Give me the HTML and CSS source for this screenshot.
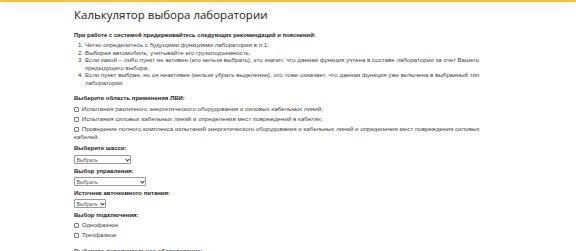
FILE: index.html
```html
<!DOCTYPE html>
<html lang="ru">
<head>
<meta charset="UTF-8" />
<meta name="viewport" content="width=device-width, initial-scale=1" />
<title>Калькулятор выбора лаборатории</title>
<link rel="stylesheet" href="styles.css">
</head>
<body>

<div class="topbar"></div>

<main class="calc">
  <h1>Калькулятор выбора лаборатории</h1>

  <p class="lead">При работе с системой придерживайтесь следующих рекомендаций и пояснений:</p>
  <ol class="rules">
    <li>Четко определитесь с будущими функциями лаборатории в п.1;</li>
    <li>Выбирая автомобиль, учитывайте его грузоподъемность;</li>
    <li>Если какой – либо пункт не активен (его нельзя выбрать), это значит, что данная функция учтена в составе лаборатории за счет Вашего предыдущего выбора;</li>
    <li>Если пункт выбран, но он неактивен (нельзя убрать выделение), это тоже означает, что данная функция уже включена в выбранный тип лаборатории</li>
  </ol>

  <h3 class="first">Выберите область применения ЛВИ:</h3>
  <label class="check"><input type="checkbox"> Испытания различного энергетического оборудования и силовых кабельных линий;</label>
  <label class="check"><input type="checkbox"> Испытания силовых кабельных линий и определения мест повреждений в кабелях;</label>
  <label class="check"><input type="checkbox"> Проведение полного комплекса испытаний энергетического оборудования и кабельных линий и определения мест повреждения силовых кабелей.</label>

  <h3>Выберите шасси:</h3>
  <span class="pick w1"><select><option>Выбрать</option></select></span>

  <h3 class="tight">Выбор управления:</h3>
  <span class="pick w2"><select><option>Выбрать</option></select></span>

  <h3 class="tight">Источник автономного питания:</h3>
  <span class="pick w3"><select><option>Выбрать</option></select></span>

  <h3 class="tight">Выбор подключения:</h3>
  <label class="check"><input type="checkbox"> Однофазное</label>
  <label class="check"><input type="checkbox"> Трехфазное</label>

  <h3 class="next">Выберите дополнительное оборудование:</h3>
</main>

</body>
</html>
```

FILE: styles.css
```css
body { margin: 0; font-family: "Liberation Sans", Arial, sans-serif; color: #333; background: #fff; }
.topbar { height: 2px; background: #f5c234; box-shadow: 0 2px 6px rgba(0,0,0,0.12); }
.calc { margin-left: 74px; width: 456px; padding-top: 4px; }
h1 { font-family: "Open Sans", sans-serif; font-weight: 400; font-size: 11.5px; color: #222; margin: 0 0 7px; line-height: 18px; }
.lead { font-size: 5.9px; font-weight: bold; color: #222; margin: 0 0 2px; line-height: 8px; }
.rules { font-size: 6.2px; line-height: 7.5px; margin: 0; padding-left: 11px; padding-right: 20px; color: #444; }
h3 { font-size: 6px; font-weight: bold; color: #222; margin: 3px 0 3px; line-height: 8px; }
h3.first { margin-top: 8px; margin-bottom: 3px; }
h3.tight { margin: 3px 0 2px; }
h3.next { margin-top: 8px; color: #444; }
.check { display: block; max-width: 430px; font-size: 6.2px; line-height: 8px; color: #444; margin-bottom: 2px; }
.check input { appearance: none; width: 5px; height: 5px; margin: 0 1px 0 0; border: 0.7px solid #777; border-radius: 1px; vertical-align: -0.5px; background: #fff; }
.pick { display: block; position: relative; height: 9px; margin-bottom: 1px; }
.pick select { appearance: none; display: block; width: 100%; height: 9px; font-family: "Liberation Sans", Arial, sans-serif; font-size: 5.3px; padding: 0 0 0 1.5px; border: 0.8px solid #999; border-radius: 1px; color: #555; background: #fff; margin: 0; box-sizing: border-box; }
.pick::after { content: ""; position: absolute; right: 2.5px; top: 2.5px; width: 2px; height: 2px; border-right: 0.8px solid #333; border-bottom: 0.8px solid #333; transform: rotate(45deg); }
.w1 { width: 57px; }
.w2 { width: 72px; }
.w3 { width: 32px; }
```
